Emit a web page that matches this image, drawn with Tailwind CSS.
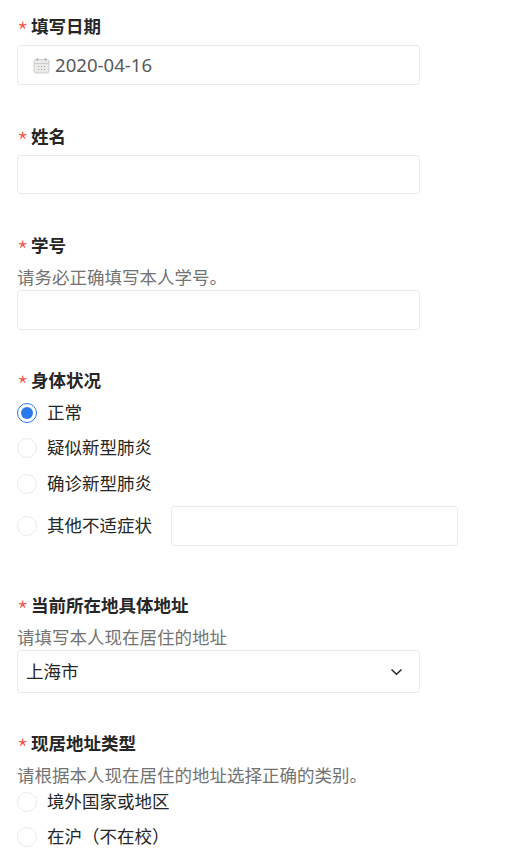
<!doctype html>
<html lang="zh-CN">
  <head>
    <meta charset="UTF-8" />
    <title>填写表单</title>
    <script src="https://cdn.jsdelivr.net/npm/@tailwindcss/browser@4"></script>
  </head>
  <body class="h-[848px] overflow-hidden bg-white font-['Noto_Sans','Noto_Sans_CJK_SC',sans-serif] text-[17.5px] text-[#262626] [text-spacing-trim:space-all]">
    <form class="pl-[17px] pt-[15px]">
      <!-- date -->
      <div class="h-[70px] w-[403px]">
        <div class="flex h-6 items-center pb-[2px] font-bold leading-6"><span class="mt-[9px] w-[14px] font-['Noto_Sans_CJK_SC'] text-[26px] leading-none font-light text-[#f5564a]">*</span>填写日期</div>
        <div class="mt-[6px] flex h-10 items-center rounded-[3px] border border-[#ebebeb] pl-[15px] text-[#595959]">
          <svg class="h-[17px] w-[17px]" viewBox="0 0 17 17" fill="none">
            <rect x="1" y="2.5" width="15" height="13.5" rx="2" fill="#ecebe8" stroke="#c9ccd0" />
            <path d="M1.5 6.5h14" stroke="#c9ccd0" />
            <path d="M4.5 1v3M12.5 1v3" stroke="#b5b8bc" stroke-width="1.4" />
            <path d="M5 9.5h1.2M8 9.5h1.2M11 9.5h1.2M5 12.5h1.2M8 12.5h1.2M11 12.5h1.2" stroke="#a8acb0" />
          </svg>
          <span class="ml-[5px] text-[18.6px] leading-none">2020-04-16</span>
        </div>
      </div>

      <!-- name -->
      <div class="mt-10 h-[69px] w-[403px]">
        <div class="flex h-6 items-center pb-[2px] font-bold leading-6"><span class="mt-[9px] w-[14px] font-['Noto_Sans_CJK_SC'] text-[26px] leading-none font-light text-[#f5564a]">*</span>姓名</div>
        <div class="mt-[6px] h-[39px] rounded-[3px] border border-[#ebebeb]"></div>
      </div>

      <!-- student id -->
      <div class="mt-10 w-[403px]">
        <div class="flex h-6 items-center pb-[2px] font-bold leading-6"><span class="mt-[9px] w-[14px] font-['Noto_Sans_CJK_SC'] text-[26px] leading-none font-light text-[#f5564a]">*</span>学号</div>
        <div class="mt-[10px] h-5 leading-[18px] whitespace-nowrap text-[#737373]">请务必正确填写本人学号。</div>
        <div class="mt-[2px] h-10 rounded-[3px] border border-[#ebebeb]"></div>
      </div>

      <!-- health -->
      <div class="mt-[39px]">
        <div class="flex h-6 items-center pb-[2px] font-bold leading-6"><span class="mt-[9px] w-[14px] font-['Noto_Sans_CJK_SC'] text-[26px] leading-none font-light text-[#f5564a]">*</span>身体状况</div>
        <div class="mt-[9px] flex h-[22px] items-center gap-[10px]">
          <span class="flex h-5 w-5 items-center justify-center rounded-full border border-[#2b78ed]"><span class="h-3 w-3 rounded-full bg-[#2b78ed]"></span></span>
          <span class="pb-[2px]">正常</span>
        </div>
        <div class="mt-[13px] flex h-[22px] items-center gap-[10px]">
          <span class="h-5 w-5 rounded-full border border-[#ebebeb]"></span>
          <span class="pb-[2px]">疑似新型肺炎</span>
        </div>
        <div class="mt-[14px] flex h-[22px] items-center gap-[10px]">
          <span class="h-5 w-5 rounded-full border border-[#ebebeb]"></span>
          <span class="pb-[2px]">确诊新型肺炎</span>
        </div>
        <div class="mt-[11px] flex h-10 items-center gap-[10px]">
          <span class="h-5 w-5 rounded-full border border-[#ebebeb]"></span>
          <span class="pb-[2px]">其他不适症状</span>
          <div class="ml-[9px] h-10 w-[287px] rounded-[3px] border border-[#ebebeb]"></div>
        </div>
      </div>

      <!-- address -->
      <div class="mt-[48px] w-[403px]">
        <div class="flex h-6 items-center pb-[2px] font-bold leading-6"><span class="mt-[9px] w-[14px] font-['Noto_Sans_CJK_SC'] text-[26px] leading-none font-light text-[#f5564a]">*</span>当前所在地具体地址</div>
        <div class="mt-[10px] h-5 leading-[18px] whitespace-nowrap text-[#737373]">请填写本人现在居住的地址</div>
        <div class="mt-[2px] flex h-[43px] items-center justify-between rounded-[3px] border border-[#ebebeb] pl-2 pr-[16px]">
          <span>上海市</span>
          <svg class="h-[8px] w-[13px]" viewBox="0 0 13 8" fill="none"><path d="M1.5 1.5 6.5 6.2 11.5 1.5" stroke="#262626" stroke-width="1.5" /></svg>
        </div>
      </div>

      <!-- address type -->
      <div class="mt-[39px]">
        <div class="flex h-6 items-center pb-[2px] font-bold leading-6"><span class="mt-[9px] w-[14px] font-['Noto_Sans_CJK_SC'] text-[26px] leading-none font-light text-[#f5564a]">*</span>现居地址类型</div>
        <div class="mt-[10px] h-5 leading-[18px] whitespace-nowrap text-[#737373]">请根据本人现在居住的地址选择正确的类别。</div>
        <div class="mt-[5px] flex h-[22px] items-center gap-[10px]">
          <span class="h-5 w-5 rounded-full border border-[#ebebeb]"></span>
          <span class="pb-[2px]">境外国家或地区</span>
        </div>
        <div class="mt-[13px] flex h-[22px] items-center gap-[10px]">
          <span class="h-5 w-5 rounded-full border border-[#ebebeb]"></span>
          <span class="pb-[2px]">在沪（不在校）</span>
        </div>
      </div>
    </form>
  </body>
</html>
